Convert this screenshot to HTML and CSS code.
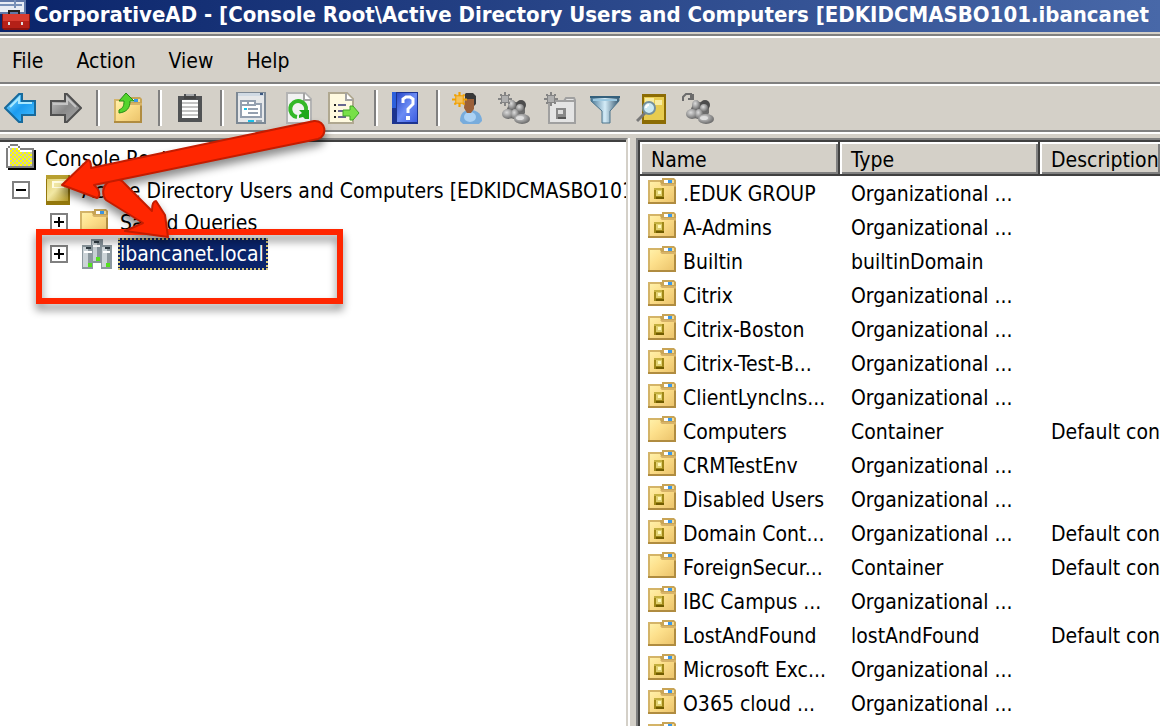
FILE: index.html
```html
<!DOCTYPE html>
<html lang="en">
<head>
<meta charset="utf-8">
<title>CorporativeAD</title>
<link rel="stylesheet" href="styles.css">
</head>
<body>
<svg class="defs" aria-hidden="true">
  <defs>
    <linearGradient id="gold" x1="0" y1="0" x2="1" y2="1"><stop offset="0" stop-color="#fff0a8"/><stop offset=".4" stop-color="#fde08c"/><stop offset="1" stop-color="#ecc46c"/></linearGradient>
    <linearGradient id="olive" x1="0" y1="0" x2="1" y2="1"><stop offset="0" stop-color="#e0d070"/><stop offset=".45" stop-color="#f2e8a4"/><stop offset="1" stop-color="#b89c28"/></linearGradient>
    <linearGradient id="blue" x1="0" y1="0" x2="1" y2="1"><stop offset="0" stop-color="#8fe0ff"/><stop offset=".5" stop-color="#1c9cf0"/><stop offset="1" stop-color="#48c0ff"/></linearGradient>
    <linearGradient id="grey" x1="0" y1="0" x2="1" y2="1"><stop offset="0" stop-color="#c8c8c8"/><stop offset=".5" stop-color="#8a8a8a"/><stop offset="1" stop-color="#a8a8a8"/></linearGradient>
    <linearGradient id="book" x1="0" y1="0" x2="1" y2="1"><stop offset="0" stop-color="#2848c8"/><stop offset=".5" stop-color="#6c8cf4"/><stop offset="1" stop-color="#3c5ce0"/></linearGradient>
    <linearGradient id="steel" x1="0" y1="0" x2="1" y2="0"><stop offset="0" stop-color="#4a7896"/><stop offset=".5" stop-color="#d4ecf8"/><stop offset="1" stop-color="#35566e"/></linearGradient>
    <radialGradient id="ball" cx=".4" cy=".35" r=".7"><stop offset="0" stop-color="#dcdcdc"/><stop offset=".5" stop-color="#a0a0a0"/><stop offset="1" stop-color="#606060"/></radialGradient>
    <pattern id="dither" width="4" height="4" patternUnits="userSpaceOnUse"><path fill="#ffff00" d="M0 0h4v4H0z"/><path fill="#c8c8b0" d="M0 0h2v2H0zM2 2h2v2H2z"/></pattern>
  </defs>
  <symbol id="folder" viewBox="0 0 28 26">
    <path fill="#d4b468" d="M0 2h12v24H0z"/><path fill="#c8a456" d="M12 2h2V0h12l2 2v24H12z"/>
    <path fill="url(#gold)" d="M2 4h10l2 4h12v16H2z"/>
    <path fill="#f6dc90" d="M16 2h10v3H16z"/><path fill="#fff" d="M16 2h5v3h-5z"/><path fill="#3c98e8" d="M20 2h4v3h-4z"/>
    <path fill="#d8b468" d="M12 6h16v2H14z"/>
    <path fill="#b08c40" d="M0 24h28v2H0zM26 9h2v17h-2z"/>
  </symbol>
  <symbol id="ou" viewBox="0 0 28 26">
    <use href="#folder" width="28" height="26"/>
    <path fill="#a08818" d="M6 10h10v11H6z"/><path fill="#c4b040" d="M6 10h8v2H6z"/><path fill="#e0d070" d="M8 12h6v6H8z"/><path fill="#fff8b8" d="M10 13h3v3h-3z"/><path fill="#705c00" d="M8 19h8v2H8z"/>
  </symbol>
  <symbol id="people" viewBox="0 0 32 32">
    <path fill="#6c6c6c" d="M12 10h10l5 4v7l-3 4-8 2-8-2v-6z"/>
    <ellipse cx="14" cy="13" rx="4" ry="5" fill="url(#ball)"/><ellipse cx="23" cy="13" rx="5" ry="5" fill="#4c4c4c"/><ellipse cx="22" cy="16" rx="4" ry="4" fill="url(#ball)"/>
    <ellipse cx="10" cy="22" rx="6" ry="5" fill="url(#ball)"/><ellipse cx="17" cy="22" rx="4" ry="5" fill="url(#ball)"/>
    <ellipse cx="24" cy="27" rx="8" ry="5" fill="url(#ball)"/><ellipse cx="22" cy="26" rx="4" ry="2" fill="#dedede"/>
  </symbol>
  <symbol id="spark" viewBox="0 0 14 14"><path d="M6 0h2v3h2V2h2v2h-1v2h3v2h-3v2h1v2h-2v-1H8v3H6v-3H4v1H2v-2h1V8H0V6h3V4H2V2h2v1h2z" fill="currentColor"/><path fill="#fff" fill-opacity=".35" d="M4 4h6v6H4z"/></symbol>
</svg>

<div class="window">
  <header class="titlebar">
    <svg class="app-icon" viewBox="0 0 30 30" aria-hidden="true">
      <path fill="#6078a8" d="M0 0h26v14H0z"/><path fill="#e8ecf4" d="M0 2h24v10H0z"/><path fill="#7890b8" d="M0 4h22v2H0zM14 0h2v8h-2z"/><path fill="#222" d="M8 10h12v4h-2v-2h-8v2H8z"/>
      <path fill="#8c1410" d="M2 14h28v14l-2 2H4l-2-2z"/><path fill="#d83c30" d="M3 14h26v8H3z"/><path fill="#b42018" d="M3 21h26v7H3z"/><path fill="#ddd" d="M8 22h2v3H8zM21 22h2v3h-2z"/>
    </svg>
    <h1 class="title">CorporativeAD - [Console Root\Active Directory Users and Computers [EDKIDCMASBO101.ibancanet</h1>
  </header>

  <nav class="menubar">
    <button type="button">File</button>
    <button type="button">Action</button>
    <button type="button">View</button>
    <button type="button">Help</button>
  </nav>

  <div class="toolbar" role="toolbar" aria-label="Standard">
    <button type="button" aria-label="Back"><svg viewBox="0 0 32 32"><path d="M1 16 15 2h3v7h13v14H18v7h-3z" fill="url(#blue)" stroke="#176a9c" stroke-width="2"/><path d="M6 15 15 6v5h13" fill="none" stroke="#a8e8ff" stroke-width="2"/></svg></button>
    <button type="button" aria-label="Forward"><svg viewBox="0 0 32 32"><path d="M31 16 17 2h-2v7H1v14h14v7h2z" fill="url(#grey)" stroke="#505050" stroke-width="2"/><path d="M3 12h14V6l9 9" fill="none" stroke="#c4c4c4" stroke-width="2"/></svg></button>
    <span class="sep"></span>
    <button type="button" aria-label="Up one level"><svg viewBox="0 0 32 32"><use href="#folder" x="2" y="4" width="28" height="28"/><path d="M14 1 22 9h-4c0 7-3 11-11 12v-3c4-2 5-4 5-9H7z" fill="#54d42c" stroke="#248c14" stroke-width="1"/></svg></button>
    <span class="sep"></span>
    <button type="button" aria-label="Paste"><svg viewBox="0 0 32 32"><path fill="#505254" d="M4 4h6V2h12v2h6v26H4z"/><path fill="#fff" d="M8 8h16v18H8z"/><path fill="#a4a6a8" d="M12 2h8v4h-8z"/><path fill="#444" d="M10 4h12v3H10z"/><path stroke="#c4c4c4" stroke-width="2" d="M8 11h16M8 15h16M8 19h16M8 23h16"/></svg></button>
    <span class="sep"></span>
    <button type="button" aria-label="Properties"><svg viewBox="0 0 32 32"><path fill="#7c8894" d="M0 0h30v32H0z"/><path fill="#e6e8ea" d="M2 4h26v26H2z"/><path fill="#d0dae4" d="M2 1h26v3H2z"/><path fill="#3c5880" d="M24 1h3v2h-3z"/><path d="M5 9h14v3h6v13H5z" fill="#fff" stroke="#94a0b0" stroke-width="2"/><path stroke="#94a0b0" stroke-width="2" d="M12 9v4M6 13h14M12 17h10M12 21h10"/><path fill="#18c0e8" d="M8 16h3v2H8zM12 28h6v2h-6z"/><path fill="#98a4b0" d="M20 28h6v2h-6z"/></svg></button>
    <button type="button" aria-label="Refresh"><svg viewBox="0 0 32 32"><path d="M5 1h18l6 6v24H5z" fill="#f2f2f2" stroke="#b4b4b4" stroke-width="2"/><path d="M22 1v7h7" fill="#fff" stroke="#a4a4a4" stroke-width="2"/><path d="M15 25a8 8 0 1 1 9-6" fill="none" stroke="#34b828" stroke-width="4"/><path fill="#20a818" d="M27 18v9h-4l-2-2-4 1v-3l3-2-3-3z"/></svg></button>
    <button type="button" aria-label="Export list"><svg viewBox="0 0 32 32"><path d="M1 1h18l6 6v24H1z" fill="#fffae0" stroke="#b0a890" stroke-width="2"/><path d="M18 1v7h7" fill="#fff" stroke="#a4a4a4" stroke-width="2"/><path fill="#222" d="M6 12h2v2H6zM6 18h2v2H6zM6 24h2v2H6z"/><path stroke="#686890" stroke-width="2" d="M10 13h8M10 19h6M10 25h8"/><path d="M15 18h7v-4h3l6 7-6 7h-3v-4h-7z" fill="#78e048" stroke="#40a428" stroke-width="1"/></svg></button>
    <span class="sep"></span>
    <button type="button" aria-label="Help"><svg viewBox="0 0 32 32"><path fill="#1c3490" d="M2 0h26v32H2z"/><path fill="url(#book)" d="M7 1h20v29H7z"/><path fill="#2c60dc" d="M2 0h4v16H2z"/><path d="M13 11V7l3-2h4l3 2v5l-5 5v4" fill="none" stroke="#fff" stroke-width="3"/><path fill="#fff" d="M16 24h4v4h-4z"/></svg></button>
    <span class="sep"></span>
    <button type="button" aria-label="New user"><svg viewBox="0 0 32 32"><path d="M8 29c0-8 4-11 11-11s11 5 11 11l-3 3H11z" fill="#78acdc"/><ellipse cx="18" cy="25" rx="6" ry="5" fill="#acd2f4"/><path d="M13 5h9v12l-3 4h-4l-3-5z" fill="#9c6038"/><path d="M14 1h7l3 3v8l-2 2V7h-9V2z" fill="#383838"/><use class="spark-gold" href="#spark" width="15" height="15"/></svg></button>
    <button type="button" aria-label="New group"><svg viewBox="0 0 32 32"><use href="#people" width="32" height="32"/><use class="spark-grey" href="#spark" width="14" height="14"/></svg></button>
    <button type="button" aria-label="New organizational unit"><svg viewBox="0 0 32 32"><path d="M5 9h15l2-3h8l1 2v23H5z" fill="#e4e4e4" stroke="#a0a0a0" stroke-width="2"/><path d="M19 9h11" stroke="#a0a0a0" stroke-width="2"/><path fill="#888" d="M12 16h10v11H12z"/><path fill="#ddd" d="M14 18h5v4h-5z"/><path fill="#555" d="M14 25h8v2h-8z"/><use class="spark-grey" href="#spark" width="14" height="14"/></svg></button>
    <button type="button" aria-label="Filter"><svg viewBox="0 0 32 32"><path d="M1 5h28v4L20 19v12h-8V19L1 9z" fill="url(#steel)" stroke="#4c748c" stroke-width="1"/><path fill="#34607c" d="M0 4h30v2H0z"/><path fill="#9cc8e0" d="M3 7h24v2H3z"/></svg></button>
    <button type="button" aria-label="Find"><svg viewBox="0 0 32 32"><path fill="#8c6c04" d="M6 2h24v30H6z"/><path fill="#e8cc50" d="M8 5h20v23H8z"/><path fill="#f8eca0" d="M9 6h9v8H9zM19 8h7v5h-7z"/><path stroke="#787878" stroke-width="3" d="m1 29 8-8"/><circle cx="13" cy="16" r="6" fill="#cceaf4" stroke="#74909c" stroke-width="2"/><path d="M10 16c0-2 1-3 3-3" fill="none" stroke="#fff" stroke-width="2"/></svg></button>
    <button type="button" aria-label="Add to group"><svg viewBox="0 0 32 32"><use href="#people" width="32" height="32"/><path d="M1 9V5l3-3h5v5M6 7h5V2" fill="none" stroke="#6c6c6c" stroke-width="2"/></svg></button>
  </div>

  <main class="panes">
    <section class="tree-pane" aria-label="Console tree">
      <ul class="tree">
        <li class="node root">
          <svg class="root-icon" viewBox="0 0 30 28" aria-hidden="true"><path fill="#000" d="M2 6h28v20H2z"/><path fill="#808080" d="M0 4h2V2h2V0h8v2h2v2h14v20H0z"/><path fill="#fff" d="M2 4h2V2h8v2h2v2h12v2H4v14H2z"/><path fill="url(#dither)" d="M4 4h8v2h2v2h12v14H4z"/></svg>
          <span class="label">Console Root</span>
        </li>
        <li class="node domain-tool">
          <button class="toggle" type="button" aria-label="Collapse"><svg viewBox="0 0 18 18"><path fill="#fff" stroke="#808080" stroke-width="2" d="M1 1h16v16H1z"/><path stroke="#000" stroke-width="2" d="M4 9h10"/></svg></button>
          <svg class="book-icon" viewBox="0 0 24 30" aria-hidden="true"><path fill="#94780c" d="M0 0h24v30H0z"/><path fill="#b8a030" d="M0 0h22v4H0z"/><path fill="url(#olive)" d="M1 4h21v22H1z"/><path fill="#fffce0" d="M6 6h12v7H6z"/><path fill="#f2e8a4" d="M8 8h10v4H8z"/></svg>
          <span class="label">Active Directory Users and Computers [EDKIDCMASBO101.ibancanet.local]</span>
        </li>
        <li class="node child">
          <button class="toggle" type="button" aria-label="Expand"><svg viewBox="0 0 18 18"><path fill="#fff" stroke="#808080" stroke-width="2" d="M1 1h16v16H1z"/><path stroke="#000" stroke-width="2" d="M4 9h10M9 4v10"/></svg></button>
          <svg class="folder-icon" aria-hidden="true"><use href="#folder" width="28" height="26"/></svg>
          <span class="label">Saved Queries</span>
        </li>
        <li class="node child">
          <button class="toggle" type="button" aria-label="Expand"><svg viewBox="0 0 18 18"><path fill="#fff" stroke="#808080" stroke-width="2" d="M1 1h16v16H1z"/><path stroke="#000" stroke-width="2" d="M4 9h10M9 4v10"/></svg></button>
          <svg class="servers-icon" viewBox="0 0 30 30" aria-hidden="true"><path fill="#88949c" d="M9 0h12v24H9z"/><path fill="#c8d0d4" d="M10 2h5v20h-5z"/><path fill="#8c989e" d="M0 6h11v24H0zM19 6h11v24H19z"/><path fill="#ccd4d8" d="M1 8h5v20H1zM20 8h5v20h-5z"/><path stroke="#303c44" stroke-width="2" d="M12 3h5M4 9h5M23 9h5"/><path stroke="#fff" stroke-width="2" d="M2 13h8M21 13h7M11 7h7"/><path fill="#54e020" d="M6 24h4v4H6zM14 18h4v4h-4zM24 24h4v4h-4z"/></svg>
          <span class="label selected">ibancanet.local</span>
        </li>
      </ul>
    </section>

    <section class="list-pane" aria-label="Contents">
      <table class="list">
        <colgroup><col class="col-name"><col class="col-type"><col></colgroup>
        <thead><tr><th>Name</th><th>Type</th><th>Description</th></tr></thead>
        <tbody>
          <tr><td><svg class="item-icon"><use href="#ou"/></svg>.EDUK GROUP</td><td>Organizational ...</td><td></td></tr>
          <tr><td><svg class="item-icon"><use href="#ou"/></svg>A-Admins</td><td>Organizational ...</td><td></td></tr>
          <tr><td><svg class="item-icon"><use href="#folder"/></svg>Builtin</td><td>builtinDomain</td><td></td></tr>
          <tr><td><svg class="item-icon"><use href="#ou"/></svg>Citrix</td><td>Organizational ...</td><td></td></tr>
          <tr><td><svg class="item-icon"><use href="#ou"/></svg>Citrix-Boston</td><td>Organizational ...</td><td></td></tr>
          <tr><td><svg class="item-icon"><use href="#ou"/></svg>Citrix-Test-B...</td><td>Organizational ...</td><td></td></tr>
          <tr><td><svg class="item-icon"><use href="#ou"/></svg>ClientLyncIns...</td><td>Organizational ...</td><td></td></tr>
          <tr><td><svg class="item-icon"><use href="#folder"/></svg>Computers</td><td>Container</td><td>Default container</td></tr>
          <tr><td><svg class="item-icon"><use href="#ou"/></svg>CRMTestEnv</td><td>Organizational ...</td><td></td></tr>
          <tr><td><svg class="item-icon"><use href="#ou"/></svg>Disabled Users</td><td>Organizational ...</td><td></td></tr>
          <tr><td><svg class="item-icon"><use href="#ou"/></svg>Domain Cont...</td><td>Organizational ...</td><td>Default container</td></tr>
          <tr><td><svg class="item-icon"><use href="#folder"/></svg>ForeignSecur...</td><td>Container</td><td>Default container</td></tr>
          <tr><td><svg class="item-icon"><use href="#ou"/></svg>IBC Campus ...</td><td>Organizational ...</td><td></td></tr>
          <tr><td><svg class="item-icon"><use href="#folder"/></svg>LostAndFound</td><td>lostAndFound</td><td>Default container</td></tr>
          <tr><td><svg class="item-icon"><use href="#ou"/></svg>Microsoft Exc...</td><td>Organizational ...</td><td></td></tr>
          <tr><td><svg class="item-icon"><use href="#ou"/></svg>O365 cloud ...</td><td>Organizational ...</td><td></td></tr>
          <tr><td><svg class="item-icon"><use href="#ou"/></svg></td><td></td><td></td></tr>
        </tbody>
      </table>
    </section>
  </main>

  <svg class="annotation" width="360" height="330" aria-hidden="true">
    <rect x="39" y="232" width="301" height="69" fill="none" stroke="#ff2600" stroke-width="6"/>
    <g fill="#ff2600" stroke="#c41c00" stroke-width="2" stroke-linejoin="round">
      <path d="M124 183c-4-5-13-4-17 0-5 5-5 12-1 17l37 23-18 8 43 6-3-22-9-14c-3 0-4 4-4 10z"/>
      <path d="M62 185 88 160q3 0 3 8L314 121c12-1 14 15 4 18L94 185c7 6 6 12 3 13z"/>
    </g>
  </svg>
</div>
</body>
</html>
```
FILE: styles.css
```css
* { box-sizing: border-box; }

body {
  margin: 0;
  background: #d4d0c8;
  color: #000;
  font: 21px/32px "DejaVu Sans Condensed", "DejaVu Sans", Tahoma, sans-serif;
}

button {
  padding: 0;
  border: 0;
  background: none;
  color: inherit;
  font: inherit;
}

svg { display: block; flex: none; }

.defs { position: absolute; width: 0; height: 0; }

.window {
  position: relative;
  display: flex;
  flex-direction: column;
  height: 100vh;
  overflow: hidden;
}

.titlebar {
  display: flex;
  gap: 4px;
  flex: none;
  height: 32px;
  overflow: hidden;
  background: linear-gradient(to right, #0a246a, #4868a8);
  color: #fff;
}

.app-icon { width: 30px; height: 30px; }

.title {
  margin: 0;
  font-size: 22px;
  line-height: 30px;
  font-weight: bold;
  white-space: nowrap;
}

.menubar {
  display: flex;
  flex: none;
  gap: 33px;
  height: 50px;
  margin-top: 2px;
  padding: 4px 12px 0;
  border-top: 2px solid #808080;
  border-bottom: 2px solid #808080;
  box-shadow: inset 0 2px #fff;
}

.toolbar {
  display: flex;
  flex: none;
  align-items: center;
  gap: 14px;
  height: 48px;
  padding: 2px 4px 0;
  border-bottom: 2px solid #808080;
  box-shadow: inset 0 2px #fff, 0 2px #fff;
}

.toolbar svg { width: 32px; height: 32px; }

.sep {
  width: 2px;
  height: 36px;
  background: #808080;
  box-shadow: 2px 0 #fff;
}

.spark-gold { color: #f0a000; }
.spark-grey { color: #848484; }

.panes {
  display: flex;
  flex: 1;
  min-height: 0;
  padding-top: 6px;
}

.tree-pane {
  flex: 0 0 628px;
  overflow: hidden;
  border-top: 2px solid #808080;
  border-right: 2px solid #d4d0c8;
  background: #fff;
  box-shadow: inset 0 2px #404040, 2px 0 #fff;
}

.tree {
  margin: 0;
  padding: 2px 0 0;
  list-style: none;
}

.node {
  display: flex;
  align-items: center;
  height: 32px;
  white-space: nowrap;
}

.root { padding-left: 6px; }
.domain-tool { padding-left: 12px; }
.child { padding-left: 50px; }

.label { padding-top: 2px; }

.toggle { margin-right: 12px; }
.toggle svg { width: 18px; height: 18px; }
.domain-tool .toggle { margin-right: 16px; }

.root-icon { width: 30px; height: 28px; margin-right: 9px; }
.book-icon { width: 24px; height: 30px; margin-right: 12px; }
.folder-icon { width: 28px; height: 26px; margin-right: 12px; }
.servers-icon { width: 30px; height: 30px; margin: 0 6px 0 2px; }

.selected {
  padding: 0 4px 0 2px;
  background: #0a246a;
  color: #fff;
  outline: 2px dotted #d8c878;
  outline-offset: -2px;
}

.list-pane {
  flex: 1;
  min-width: 0;
  margin-left: 8px;
  overflow: hidden;
  border-top: 2px solid #808080;
  border-left: 2px solid #808080;
  background: #404040;
  padding: 2px 0 0 2px;
}

.list {
  width: 100%;
  table-layout: fixed;
  border-collapse: separate;
  border-spacing: 0;
  background: #fff;
}

.col-name, .col-type { width: 200px; }

.list th {
  height: 34px;
  padding: 4px 10px 0 11px;
  border: 2px solid #404040;
  border-width: 0 2px 2px 0;
  background: #d4d0c8;
  box-shadow: inset 2px 2px #fff, inset -2px -2px #808080;
  font-weight: normal;
  line-height: 28px;
  text-align: left;
}

.list th:last-child { border-right: 0; padding-right: 0; }

.list td {
  height: 34px;
  padding: 2px 0 0 11px;
  overflow: hidden;
  white-space: nowrap;
}

.list td:first-child { padding-left: 8px; }

.item-icon {
  display: inline-block;
  width: 28px;
  height: 26px;
  margin-right: 7px;
  vertical-align: -3px;
}

.annotation {
  position: absolute;
  top: 0;
  left: 0;
  pointer-events: none;
  filter: drop-shadow(0 6px 4px rgba(0, 0, 0, 0.45));
}
```
